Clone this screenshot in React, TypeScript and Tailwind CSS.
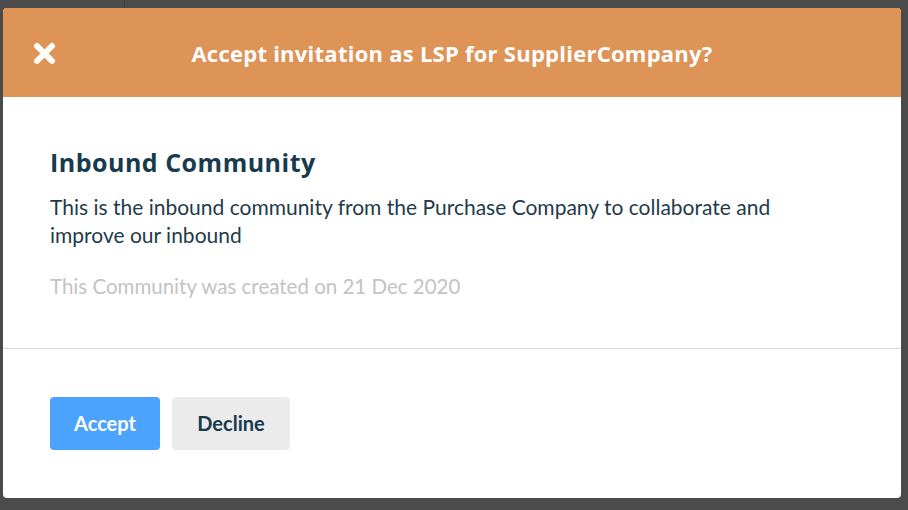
import React from "react";

export default function App() {
  return (
    <div
      className="w-[908px] h-[510px] bg-[#4a4b4a] pt-[8px] pl-[3px] overflow-hidden relative"
      style={{ fontFamily: "Lato, 'Open Sans', sans-serif" }}
    >
      <div className="absolute left-[124px] top-0 w-[1px] h-[8px] bg-[#3f403f]" />
      <div className="w-[898px] h-[490px] bg-white rounded-[4px] overflow-hidden flex flex-col">
        <div className="h-[89px] bg-[#de9357] flex items-center relative">
          <div className="absolute left-[30px] top-[34px] w-[23px] h-[23px]">
            <svg width="23" height="23" viewBox="0 0 23 23">
              <path d="M4 4 L19 19 M19 4 L4 19" stroke="white" strokeWidth="6" strokeLinecap="round" />
            </svg>
          </div>
          <div
            className="w-full text-center text-white font-bold text-[22px] tracking-[0.25px] leading-none pt-[1px]"
            style={{ fontFamily: "'Open Sans', sans-serif" }}
          >
            Accept invitation as LSP for SupplierCompany?
          </div>
        </div>
        <div className="h-[252px] border-b border-[#dcdcdc] px-[47px] pt-[48px]">
          <div
            className="text-[25px] font-bold text-[#173a4c] tracking-[0.5px] leading-[35px]"
            style={{ fontFamily: "'Open Sans', sans-serif" }}
          >
            Inbound Community
          </div>
          <div className="mt-[13px] text-[21px] text-[#1f3b4b] leading-[28px] w-[770px]">
            This is the inbound community from the Purchase Company to collaborate and improve our inbound
          </div>
          <div className="mt-[23px] text-[20.5px] text-[#c3c3c3] leading-[28px]">
            This Community was created on 21 Dec 2020
          </div>
        </div>
        <div className="flex-1 flex items-center gap-[12px] px-[47px] pb-[1px]">
          <button className="w-[110px] h-[53px] rounded-[4px] bg-[#4ca3fe] text-white font-bold text-[20px]">
            Accept
          </button>
          <button className="w-[118px] h-[53px] rounded-[4px] bg-[#ebebeb] text-[#173a4c] font-bold text-[20px]">
            Decline
          </button>
        </div>
      </div>
    </div>
  );
}
